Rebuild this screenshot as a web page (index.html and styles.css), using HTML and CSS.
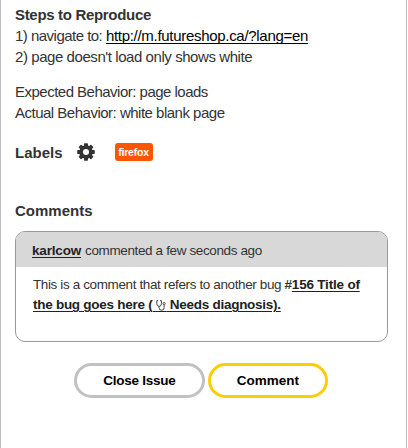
FILE: index.html
```html
<!DOCTYPE html>
<html lang="en">
<head>
<meta charset="utf-8">
<title>Issue</title>
<link rel="stylesheet" href="styles.css">
</head>
<body>
<main class="issue">
  <section class="description">
    <h2 class="heading steps-title">Steps to Reproduce</h2>
    <p class="line"><span class="nav-step">1) navigate to: </span><a class="url" href="#">http://m.futureshop.ca/?lang=en</a></p>
    <p class="line step-two">2) page doesn't load only shows white</p>
    <p class="line expected">Expected Behavior: page loads</p>
    <p class="line actual">Actual Behavior: white blank page</p>
  </section>
  <section class="labels">
    <h2 class="heading labels-title">Labels</h2>
    <svg class="gear" viewBox="0 0 18 18" aria-hidden="true">
      <g fill="#333">
        <rect id="tooth" x="7" y="0.2" width="4" height="17.6" rx="0.8"/>
        <use href="#tooth" transform="rotate(45 9 9)"/>
        <use href="#tooth" transform="rotate(90 9 9)"/>
        <use href="#tooth" transform="rotate(135 9 9)"/>
        <circle cx="9" cy="9" r="6.8"/>
      </g>
      <circle cx="9" cy="9" r="3" fill="#fff"/>
    </svg>
    <span class="tag">firefox</span>
  </section>
  <h2 class="heading comments-title">Comments</h2>
  <article class="comment">
    <header class="comment-head"><a class="author" href="#">karlcow</a><span class="when">commented a few seconds ago</span></header>
    <div class="comment-body">
      <p class="comment-line"><span class="refers">This is a comment that refers to another bug </span><b class="number">#<a class="ref" href="#">156 Title of</a></b></p>
      <p class="comment-line"><a class="ref ref-rest" href="#">the bug goes here ( <span class="status">&nbsp;&nbsp;&nbsp;<svg class="steth" viewBox="0 0 10 11" aria-hidden="true"><path d="M2.2.6H.8v3.2a2.3 2.5 0 0 0 4.6 0V.6H4M3.1 6.3v1.5a2.5 2.4 0 0 0 5 0V4.7" fill="none" stroke="#444" stroke-width="1"/><circle cx="8.1" cy="3.6" r="1.1" fill="#fff" stroke="#444" stroke-width=".9"/></svg></span> Needs diagnosis).</a></p>
    </div>
  </article>
  <div class="actions">
    <button class="btn btn-close">Close Issue</button>
    <button class="btn btn-comment">Comment</button>
  </div>
</main>
</body>
</html>
```
FILE: styles.css
```css
* { box-sizing: border-box; }
body {
  margin: 0;
  background: #fff;
  color: #333;
  font-family: "Liberation Sans", Arial, sans-serif;
}
p, h2 { margin: 0; }
.issue {
  width: 407px;
  height: 448px;
  padding: 4px 18px 0 14px;
  border-left: 1px solid #bbb;
  border-right: 1px solid #bbb;
}
.heading { font-size: 15px; line-height: 21px; font-weight: bold; white-space: nowrap; }
.steps-title { letter-spacing: -0.32px; }
.line { font-size: 15px; line-height: 21px; white-space: nowrap; }
.nav-step { letter-spacing: -0.52px; }
.url { color: #000; letter-spacing: -0.3px; text-decoration-thickness: 1px; text-underline-offset: 2px; text-decoration-skip-ink: none; }
.step-two { letter-spacing: -0.43px; }
.expected { margin-top: 14px; letter-spacing: -0.51px; }
.actual { letter-spacing: -0.5px; }
.labels { display: flex; align-items: center; height: 21px; margin-top: 18px; }
.labels-title { padding-top: 1px; }
.gear { width: 18px; height: 18px; margin: 1px 0 0 14px; }
.tag {
  width: 38px;
  height: 18px;
  margin-left: 20px;
  border-radius: 3px;
  background: #ff5500;
  color: #fff;
  font-size: 10.5px;
  font-weight: bold;
  letter-spacing: -0.2px;
  line-height: 19px;
  text-align: center;
}
.comments-title { margin-top: 38px; }
.comment {
  width: 373px;
  height: 111px;
  margin-top: 10px;
  border: 1px solid #999;
  border-radius: 10px;
  overflow: hidden;
}
.comment-head {
  display: flex;
  height: 35px;
  padding-left: 16px;
  background: #d8d8d8;
  font-size: 13.5px;
  line-height: 38px;
  white-space: nowrap;
}
.author { color: #222; font-weight: bold; letter-spacing: -0.18px; text-underline-offset: 2px; text-decoration-thickness: 1px; }
.when { margin-left: 4px; letter-spacing: -0.37px; }
.comment-body { padding: 8px 0 0 17px; font-size: 13.5px; line-height: 20px; white-space: nowrap; }
.refers { letter-spacing: -0.38px; }
.number { letter-spacing: -0.2px; }
.ref { color: #222; font-weight: bold; text-underline-offset: 2px; text-decoration-thickness: 1px; }
.ref-rest { letter-spacing: -0.27px; }
.status { position: relative; }
.steth { position: absolute; left: 0; top: 3px; width: 10px; height: 11px; }
.actions { display: flex; gap: 3px; margin: 21px 0 0 59px; }
.btn {
  height: 35px;
  padding: 0;
  border: 3px solid #c1c1c1;
  border-radius: 18px;
  background: #fff;
  color: #000;
  font: bold 13.5px "Liberation Sans", Arial, sans-serif;
}
.btn-close { width: 131px; letter-spacing: -0.25px; }
.btn-comment { width: 120px; border-color: #fc0; }
```
